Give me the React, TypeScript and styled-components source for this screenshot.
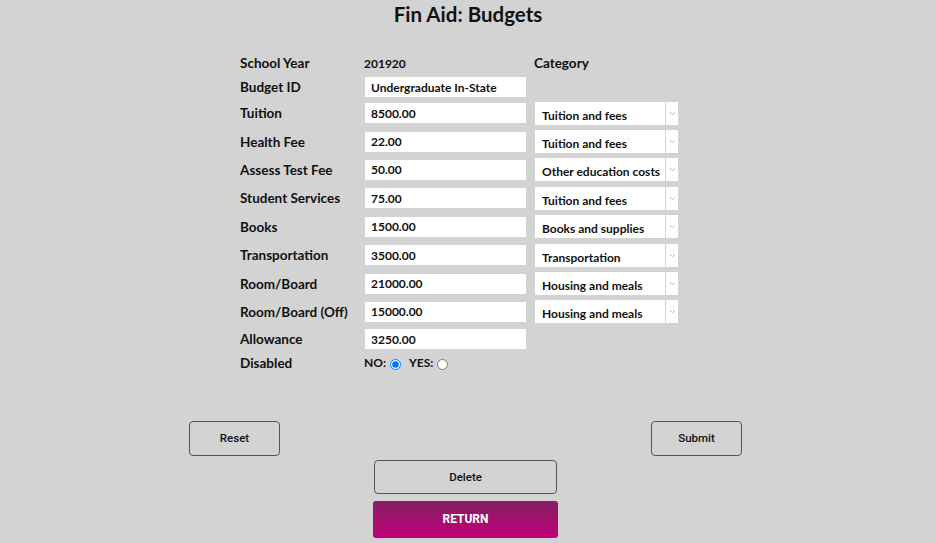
import React from 'react';
import styled, { createGlobalStyle } from 'styled-components';

const GlobalStyle = createGlobalStyle`
  html, body {
    margin: 0;
    padding: 0;
    background: #d3d3d3;
  }
  body {
    font-family: 'Lato', 'Open Sans', sans-serif;
    color: #111;
  }
`;

const Page = styled.div`
  width: 936px;
  height: 543px;
  overflow: hidden;
`;

const Title = styled.h1`
  margin: 0;
  height: 28px;
  line-height: 28px;
  text-align: center;
  font-size: 20.5px;
  font-weight: 700;
`;

const Form = styled.div`
  margin-top: 23px;
  display: flex;
  flex-direction: column;
  align-items: center;
`;

const Row = styled.div<{ $h: number }>`
  display: grid;
  grid-template-columns: 124px 170px 162px;
  align-items: center;
  height: ${(p) => p.$h}px;
`;

const Label = styled.div`
  font-size: 13.5px;
  font-weight: 700;
  white-space: nowrap;
`;

const Value = styled.div`
  font-size: 12px;
  font-weight: 700;
`;

const TextInput = styled.input`
  box-sizing: border-box;
  width: 161px;
  height: 20px;
  margin: 0 0 0 1px;
  padding: 0 6px;
  border: none;
  outline: none;
  background: #fff;
  font-family: inherit;
  font-size: 12px;
  font-weight: 700;
  color: #111;
`;

const SelectBox = styled.div`
  display: flex;
  width: 143px;
  height: 23px;
  margin-left: 1px;
  background: #fff;
`;

const Select = styled.select`
  flex: 1;
  min-width: 0;
  appearance: none;
  border: none;
  outline: none;
  background: transparent;
  padding: 4px 0 0 7px;
  font-family: inherit;
  font-size: 12px;
  font-weight: 700;
  color: #111;
`;

const Arrow = styled.span`
  width: 12px;
  display: flex;
  align-items: center;
  justify-content: center;
  border-left: 1px solid #d3d3d3;
`;

const RadioGroup = styled.div`
  display: flex;
  align-items: center;
  font-size: 12px;
  font-weight: 700;
`;

const Radio = styled.input`
  width: 11px;
  height: 11px;
  margin: 3px 8px 0 4px;
`;

const Actions = styled.div`
  width: 553px;
  margin: 48px 0 0 189px;
  display: flex;
  flex-direction: column;
  align-items: center;
`;

const ActionRow = styled.div`
  align-self: stretch;
  display: flex;
  justify-content: space-between;
`;

const OutlineButton = styled.button<{ $w: number; $h: number }>`
  box-sizing: border-box;
  width: ${(p) => p.$w}px;
  height: ${(p) => p.$h}px;
  border: 1px solid #555;
  border-radius: 4px;
  background: transparent;
  font-family: 'Roboto', sans-serif;
  font-size: 11.5px;
  font-weight: 500;
  color: #111;
  padding: 0;
`;

const ReturnButton = styled.button`
  width: 185px;
  height: 37px;
  margin-top: 7px;
  border: none;
  border-radius: 3px;
  background: linear-gradient(#851f62, #c1007a);
  color: #fff;
  font-family: 'Roboto', sans-serif;
  font-size: 12px;
  font-weight: 700;
  padding: 0;
`;

const Chevron = () => (
  <svg width="7" height="5" viewBox="0 0 7 5">
    <path d="M1 1.5 L3.5 3.5 L6 1.5" fill="none" stroke="#b5b5b5" strokeWidth="1" />
  </svg>
);

const CategorySelect: React.FC<{ value: string }> = ({ value }) => (
  <SelectBox>
    <Select defaultValue={value}>
      <option>Tuition and fees</option>
      <option>Other education costs</option>
      <option>Books and supplies</option>
      <option>Transportation</option>
      <option>Housing and meals</option>
    </Select>
    <Arrow>
      <Chevron />
    </Arrow>
  </SelectBox>
);

const costs = [
  { label: 'Tuition', amount: '8500.00', category: 'Tuition and fees' },
  { label: 'Health Fee', amount: '22.00', category: 'Tuition and fees' },
  { label: 'Assess Test Fee', amount: '50.00', category: 'Other education costs' },
  { label: 'Student Services', amount: '75.00', category: 'Tuition and fees' },
  { label: 'Books', amount: '1500.00', category: 'Books and supplies' },
  { label: 'Transportation', amount: '3500.00', category: 'Transportation' },
  { label: 'Room/Board', amount: '21000.00', category: 'Housing and meals' },
  { label: 'Room/Board (Off)', amount: '15000.00', category: 'Housing and meals' },
];

export default function App() {
  return (
    <Page>
      <GlobalStyle />
      <Title>Fin Aid: Budgets</Title>
      <Form>
        <Row $h={24}>
          <Label>School Year</Label>
          <Value>201920</Value>
          <Label>Category</Label>
        </Row>
        <Row $h={24}>
          <Label>Budget ID</Label>
          <TextInput defaultValue="Undergraduate In-State" />
          <div />
        </Row>
        {costs.map((c) => (
          <Row $h={28.4} key={c.label}>
            <Label>{c.label}</Label>
            <TextInput defaultValue={c.amount} />
            <CategorySelect value={c.category} />
          </Row>
        ))}
        <Row $h={26.4}>
          <Label>Allowance</Label>
          <TextInput defaultValue="3250.00" />
          <div />
        </Row>
        <Row $h={20}>
          <Label>Disabled</Label>
          <RadioGroup>
            NO:
            <Radio type="radio" name="disabled" defaultChecked />
            YES:
            <Radio type="radio" name="disabled" />
          </RadioGroup>
          <div />
        </Row>
      </Form>
      <Actions>
        <ActionRow>
          <OutlineButton $w={91} $h={35}>Reset</OutlineButton>
          <OutlineButton $w={91} $h={35}>Submit</OutlineButton>
        </ActionRow>
        <OutlineButton $w={183} $h={34} style={{ marginTop: 4 }}>
          Delete
        </OutlineButton>
        <ReturnButton>RETURN</ReturnButton>
      </Actions>
    </Page>
  );
}
